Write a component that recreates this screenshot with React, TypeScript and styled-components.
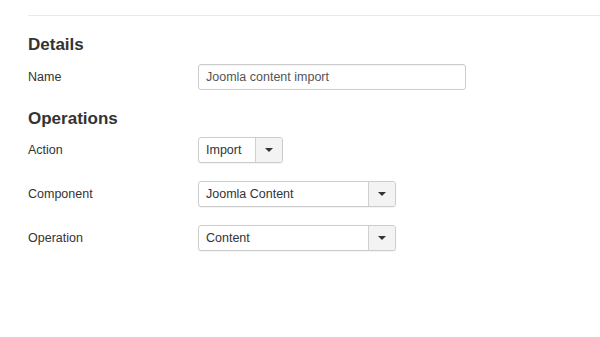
import React from "react";
import styled, { createGlobalStyle } from "styled-components";

const GlobalStyle = createGlobalStyle`
  html, body {
    margin: 0;
    padding: 0;
    background: #ffffff;
  }
  body {
    font-family: "Liberation Sans", Arial, sans-serif;
    color: #333333;
  }
`;

const Page = styled.div`
  width: 600px;
  height: 337px;
  padding: 15px 0 0 28px;
  box-sizing: border-box;
  overflow: hidden;
`;

const Rule = styled.div`
  height: 1px;
  background: #e9e9e9;
  margin-bottom: 18px;
`;

const SectionTitle = styled.h3<{ $gap: number }>`
  margin: 0 0 ${({ $gap }) => $gap}px 0;
  font-size: 17px;
  line-height: 21px;
  font-weight: 700;
  color: #333333;
`;

const Row = styled.div`
  display: flex;
  align-items: center;
  height: 26px;
  margin-bottom: 18px;
`;

const Label = styled.label`
  width: 170px;
  flex: none;
  font-size: 12.5px;
  color: #333333;
`;

const TextInput = styled.input`
  width: 268px;
  height: 26px;
  box-sizing: border-box;
  padding: 0 7px;
  border: 1px solid #cccccc;
  border-radius: 3px;
  box-shadow: inset 0 1px 1px rgba(0, 0, 0, 0.05);
  font-family: "Liberation Sans", Arial, sans-serif;
  font-size: 12.5px;
  color: #555555;
  outline: none;
`;

const Select = styled.div<{ $width: number }>`
  display: flex;
  width: ${({ $width }) => $width}px;
  height: 26px;
  box-sizing: border-box;
  border: 1px solid #cccccc;
  border-radius: 3px;
  box-shadow: 0 1px 1px rgba(0, 0, 0, 0.05);
  overflow: hidden;
  background: #ffffff;
`;

const SelectValue = styled.div`
  flex: 1;
  display: flex;
  align-items: center;
  padding-left: 7px;
  font-size: 12.5px;
  color: #333333;
`;

const Toggle = styled.div`
  width: 26px;
  flex: none;
  display: flex;
  align-items: center;
  justify-content: center;
  border-left: 1px solid #d0d0d0;
  background: #f3f3f3;
`;

const Caret = styled.span`
  width: 0;
  height: 0;
  border-left: 4px solid transparent;
  border-right: 4px solid transparent;
  border-top: 4px solid #333333;
`;

const Dropdown = ({ value, width }: { value: string; width: number }) => (
  <Select $width={width}>
    <SelectValue>{value}</SelectValue>
    <Toggle>
      <Caret />
    </Toggle>
  </Select>
);

export default function App() {
  return (
    <>
      <GlobalStyle />
      <Page>
        <Rule />
        <SectionTitle $gap={9}>Details</SectionTitle>
        <Row>
          <Label>Name</Label>
          <TextInput defaultValue="Joomla content import" />
        </Row>
        <SectionTitle $gap={8}>Operations</SectionTitle>
        <Row>
          <Label>Action</Label>
          <Dropdown value="Import" width={85} />
        </Row>
        <Row>
          <Label>Component</Label>
          <Dropdown value="Joomla Content" width={198} />
        </Row>
        <Row>
          <Label>Operation</Label>
          <Dropdown value="Content" width={198} />
        </Row>
      </Page>
    </>
  );
}
